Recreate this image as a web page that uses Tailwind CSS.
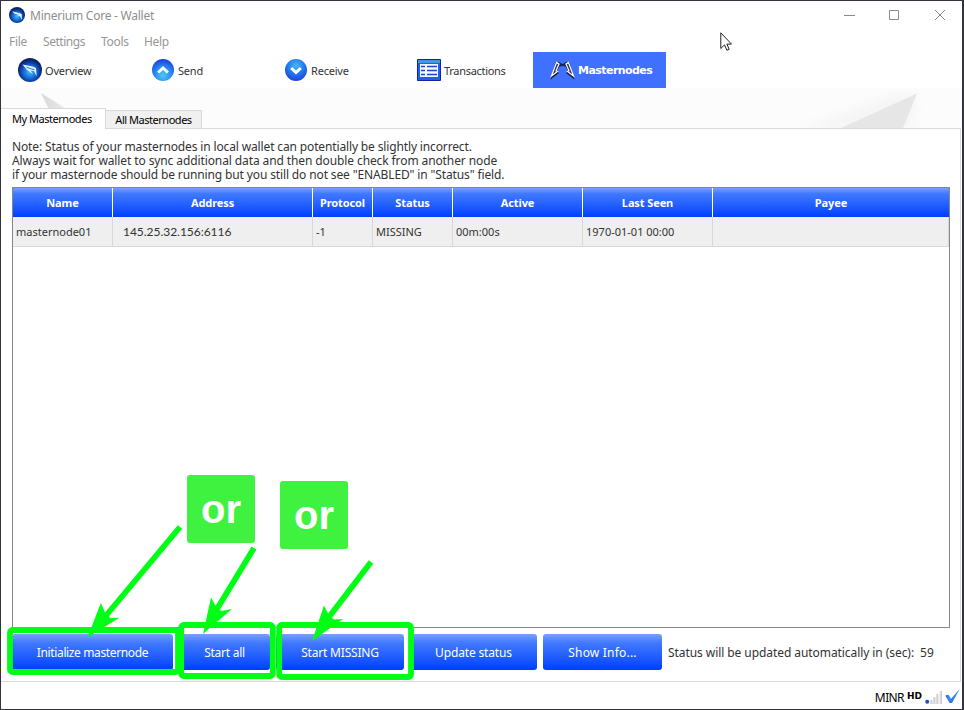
<!DOCTYPE html>
<html lang="en">
<head>
<meta charset="utf-8">
<title>Minerium Core - Wallet</title>
<script src="https://cdn.jsdelivr.net/npm/@tailwindcss/browser@4"></script>
</head>
<body class="w-[964px] h-[710px] overflow-hidden bg-white">
<svg width="0" height="0" class="absolute">
  <defs>
    <radialGradient id="orb" cx="50%" cy="58%" r="50%"><stop offset="0" stop-color="#3cc0f8"/><stop offset=".5" stop-color="#1870d8"/><stop offset=".8" stop-color="#0c3ea4"/><stop offset="1" stop-color="#0a2464"/></radialGradient>
    <radialGradient id="up" cx="50%" cy="75%" r="75%"><stop offset="0" stop-color="#4cc8f8"/><stop offset=".5" stop-color="#2a8cf0"/><stop offset="1" stop-color="#1c3ce0"/></radialGradient>
    <radialGradient id="down" cx="50%" cy="30%" r="75%"><stop offset="0" stop-color="#46b8f6"/><stop offset=".5" stop-color="#2478ec"/><stop offset="1" stop-color="#1c38dc"/></radialGradient>
    <linearGradient id="haze" x1="0" y1="0" x2="1" y2="0"><stop offset="0" stop-color="#d8d8d8"/><stop offset=".8" stop-color="#fafafa"/></linearGradient>
    <linearGradient id="tick" x1="0" y1="0" x2="1" y2="1"><stop offset="0" stop-color="#1a50c8"/><stop offset=".5" stop-color="#3c8cf8"/><stop offset="1" stop-color="#1c4cc8"/></linearGradient>
    <filter id="soft"><feGaussianBlur stdDeviation="6"/></filter>
  </defs>
</svg>
<div class="relative flex flex-col w-[964px] h-[710px] border border-[#33333c] border-r-2 bg-white font-['Noto_Sans',sans-serif] text-[12px] text-[#333]">
  <!-- title bar -->
  <header class="flex h-[30px] shrink-0 items-center pl-2 text-[#8e8e8e]">
    <svg class="w-4 h-4 -mt-[2px]" viewBox="0 0 24 24"><circle cx="12" cy="12" r="12" fill="url(#orb)"/><path d="M4.500 6.500L16 9.500l3 1 .5 9-3-5.500-5-.5 4-1.500-7-2z" fill="#e8f6ff"/></svg>
    <span class="ml-[5px] text-[12px] tracking-[-0.24px]">Minerium Core - Wallet</span>
    <svg class="ml-auto mr-[15px] -mt-[2px] w-[103px] h-[12px]" viewBox="0 0 103 12" fill="none" stroke="#8a8a8a"><path d="M0 6.500h11"/><path d="M45.500 1.500h9v9h-9z"/><path d="M91 1l10 10M101 1l-10 10"/></svg>
  </header>
  <!-- menus -->
  <nav class="flex h-[21px] shrink-0 items-center pl-2 pt-px text-[#969696] text-[12px] tracking-[-0.3px]">
    <span class="w-[34px]">File</span><span class="w-[58px] tracking-[-0.45px]">Settings</span><span class="w-[43px]">Tools</span><span>Help</span>
  </nav>
  <!-- toolbar -->
  <nav class="flex h-[36px] shrink-0 items-center text-[11px] tracking-[-0.2px]">
    <div class="flex w-[133px] items-center pl-[17px]">
      <svg class="w-6 h-6 shrink-0" viewBox="0 0 24 24"><circle cx="12" cy="12" r="12" fill="url(#orb)"/><path d="M4.500 6.500L15.500 8.800l2.500 1.200.6 8.500-2.600-5.500-3.500-.6L15 16 9 12z" fill="#e4f4ff"/><path d="M8.500 9.200l5 1.800 3 .6" stroke="#2874c8" stroke-width="1" fill="none"/></svg>
      <span class="ml-[3px] pt-[2px]">Overview</span>
    </div>
    <div class="flex w-[133px] items-center pl-[18px]">
      <svg class="w-[22px] h-[22px] shrink-0" viewBox="0 0 22 22"><circle cx="11" cy="11" r="11" fill="url(#up)"/><path d="M6.200 13.500L11 9l4.800 4.500" fill="none" stroke="#fff" stroke-width="3"/></svg>
      <span class="ml-[4px] pt-[2px]">Send</span>
    </div>
    <div class="flex w-[133px] items-center pl-[18px]">
      <svg class="w-[22px] h-[22px] shrink-0" viewBox="0 0 22 22"><circle cx="11" cy="11" r="11" fill="url(#down)"/><path d="M6.200 9L11 13.500 15.800 9" fill="none" stroke="#fff" stroke-width="3"/></svg>
      <span class="ml-[4px] pt-[2px]">Receive</span>
    </div>
    <div class="flex w-[133px] items-center pl-[17px]">
      <svg class="w-[24px] h-[22px] shrink-0" viewBox="0 0 24 22"><path d="M.5.5h23v21H.5z" fill="#2060e8" stroke="#1024a0"/><path d="M1 1h22v3H1z" fill="#3c98e8"/><path d="M3 5h18v13H3z" fill="#f2f8ff"/><path d="M4 7.500h4M4 11.500h4M4 15.500h4M10 7.500h10M10 11.500h10M10 15.500h10" stroke="#1c44c8" stroke-width="1.500"/></svg>
      <span class="ml-[3px] pt-[2px] tracking-[-0.3px]">Transactions</span>
    </div>
    <div class="flex h-[36px] w-[133px] items-center bg-[#4070ff] pl-[17px] text-white">
      <svg class="w-[25px] h-[22px] shrink-0" viewBox="0 0 25 22"><path d="M6.500 4h3l1.500 1.500h3L15.500 4h3M9 7l3.500-1L16 7" fill="none" stroke="#18245c" stroke-width="1.700"/><path d="M5.500 3L.5 20.500l8.500-6.500-2-1.500L10 6zM19.500 3l5 17.500-8.500-6.500 2-1.500L15 6z" fill="#141c44"/><path d="M6.500 3.500L1.500 17l6-4.500-1.500-.5L9 5zM18.500 3.500l5 13.500-6-4.500 1.500-.5L16 5z" fill="#28345c" stroke="#fff" stroke-width="1.200"/></svg>
      <span class="ml-[3px] pt-[2px] font-['DejaVu_Sans',sans-serif] text-[11px] font-bold tracking-[-0.55px]">Masternodes</span>
    </div>
  </nav>
  <!-- tab strip over the watermark -->
  <div class="relative flex h-[40px] shrink-0 items-end bg-[#fcfcfc] text-[11px] text-black tracking-[-0.47px]">
    <svg class="absolute inset-0 w-[961px] h-[40px]" viewBox="1 88 961 40"><path d="M800 130L900 94l16 3-6 33z" fill="#f4f4f4" filter="url(#soft)"/><path d="M841 128L917 93.500 903 128z" fill="#e6e6e6"/><path d="M41 93l56 35H58z" fill="url(#haze)"/></svg>
    <div class="relative z-10 -mb-px flex h-[21px] w-[105px] items-center border border-b-0 border-l-0 border-[#d9d9d9] bg-white pl-[11px]">My Masternodes</div>
    <div class="relative flex h-[18px] w-[96px] items-center justify-center border border-b-0 border-l-0 border-[#d9d9d9] bg-[#f0f0f0] pt-px">All Masternodes</div>
  </div>
  <!-- tab page -->
  <main class="flex h-[554px] w-[960px] shrink-0 flex-col border border-l-0 border-[#d9d9d9] bg-white pl-[11px] pr-[10px]">
    <div class="mt-[11px] h-[47px] whitespace-nowrap text-[12px] leading-[14px]">
      <p class="tracking-[-0.14px]">Note: Status of your masternodes in local wallet can potentially be slightly incorrect.</p>
      <p class="tracking-[-0.105px]">Always wait for wallet to sync additional data and then double check from another node</p>
      <p class="tracking-[-0.13px]">if your masternode should be running but you still do not see "ENABLED" in "Status" field.</p>
    </div>
    <section class="h-[441px] w-[938px] border border-[#828790]">
      <div class="grid h-[29px] grid-cols-[100px_200px_60px_80px_130px_130px_1fr] bg-linear-to-b from-[#78a0ff] via-[#4078ff] via-20% to-[#003cff] text-center text-[11px] font-bold leading-[29px] text-white tracking-[-0.1px]">
        <div class="border-r border-white">Name</div><div class="border-r border-white">Address</div><div class="border-r border-white">Protocol</div><div class="border-r border-white">Status</div><div class="border-r border-white">Active</div><div class="border-r border-white">Last Seen</div><div>Payee</div>
      </div>
      <div class="grid h-[30px] grid-cols-[100px_200px_60px_80px_130px_130px_1fr] border-b border-[#d8d8d8] bg-[#efefef] text-[11px] leading-[29px]">
        <div class="border-r border-[#d8d8d8] pl-[3px]">masternode01</div><div class="border-r border-[#d8d8d8] pl-[10px] font-[Lato,sans-serif] text-[12px] tracking-[-0.03px]">145.25.32.156:6116</div><div class="border-r border-[#d8d8d8] pl-[3px]">-1</div><div class="border-r border-[#d8d8d8] pl-[3px]">MISSING</div><div class="border-r border-[#d8d8d8] pl-[3px]">00m:00s</div><div class="border-r border-[#d8d8d8] pl-[3px]">1970-01-01 00:00</div><div class="border-r border-[#d8d8d8]"></div>
      </div>
    </section>
    <div class="mt-[6px] flex h-[36px] items-center gap-[6px] text-[12px] text-white">
      <div class="flex h-full w-[161px] items-center justify-center rounded-[3px] bg-linear-to-b from-[#78a0ff] via-[#4078ff] via-25% to-[#003cff] pt-[2px] tracking-[-0.37px]">Initialize masternode</div>
      <div class="flex h-full w-[91px] items-center justify-center rounded-[3px] bg-linear-to-b from-[#78a0ff] via-[#4078ff] via-25% to-[#003cff] pt-[2px] tracking-[-0.25px]">Start all</div>
      <div class="flex h-full w-[128px] items-center justify-center rounded-[3px] bg-linear-to-b from-[#78a0ff] via-[#4078ff] via-25% to-[#003cff] pt-[2px] tracking-[-0.2px]">Start MISSING</div>
      <div class="flex h-full w-[127px] items-center justify-center rounded-[3px] bg-linear-to-b from-[#78a0ff] via-[#4078ff] via-25% to-[#003cff] pt-[2px] tracking-[-0.15px]">Update status</div>
      <div class="flex h-full w-[119px] items-center justify-center rounded-[3px] bg-linear-to-b from-[#78a0ff] via-[#4078ff] via-25% to-[#003cff] pt-[2px] tracking-[0.2px]">Show Info...</div>
      <span class="whitespace-nowrap pt-[2px] text-[#333] tracking-[-0.07px]">Status will be updated automatically in (sec):</span>
      <span class="pt-[2px] text-[#333]">59</span>
    </div>
  </main>
  <!-- status bar -->
  <footer class="flex flex-1 items-center justify-end pr-[2px] text-black">
    <span class="pt-[4px] text-[12px] tracking-[-0.6px]">MINR</span>
    <span class="ml-[3px] pt-[3px] font-['DejaVu_Sans',sans-serif] text-[9px] font-bold">HD</span>
    <svg class="ml-[3px] mt-[3px] w-[17px] h-[16px]" viewBox="0 0 17 16"><circle cx="2.200" cy="12.800" r="2" fill="#2846c0"/><path d="M6 11v4M9 8v7M12 5v10M15.500 2v13" stroke="#dcdcdc" stroke-width="1.800"/><path d="M7 11v4M10 8v7M13 5v10M16.500 2v13" stroke="#b4b4b4" stroke-width=".6"/></svg>
    <svg class="ml-[3px] w-[15px] h-[16px]" viewBox="0 0 15 16"><path d="M.2 7.500l3.300-.8 2.500 4L14.800.8 7 15H4.500z" fill="url(#tick)"/></svg>
  </footer>
  <!-- annotations -->
  <div class="absolute left-[186px] top-[474px] flex h-[68px] w-[68px] items-center justify-center rounded-[3px] bg-[#40f240] font-['Liberation_Sans',sans-serif] text-[40px] font-bold text-white">or</div>
  <div class="absolute left-[279px] top-[480px] flex h-[68px] w-[68px] items-center justify-center rounded-[3px] bg-[#40f240] font-['Liberation_Sans',sans-serif] text-[40px] font-bold text-white">or</div>
  <svg class="absolute -left-px -top-px w-[964px] h-[710px]" viewBox="0 0 964 710">
    <g fill="none" stroke="#00ff14" stroke-width="5.800">
      <rect x="10" y="630" width="168" height="42" rx="2.500"/>
      <rect x="181.200" y="625" width="91.600" height="51" rx="2.500"/>
      <rect x="279.200" y="625" width="131.800" height="52" rx="2.500"/>
      <path d="M180 527L104 618M254 548L217 609M371 562L329 617"/>
    </g>
    <g fill="#00ff14"><path d="M87.500 637.500l13.300-34.500 4.500 10 5 5 9-.3z"/><path d="M203 634l8-36.500 5.500 10 5 3.500 10.500-2z"/><path d="M312 641l12-35.500 5 10 5 4 9-.500z"/></g>
  </svg>
  <svg class="absolute left-[719px] top-[31px] w-[12px] h-[20px]" viewBox="0 0 12 20"><path d="M.8.8v15.700l3.700-3.600 2.400 5.400 2.300-1-2.300-5.200h4.600z" fill="#fff" stroke="#222" stroke-width="1"/></svg>
</div>
</body>
</html>
